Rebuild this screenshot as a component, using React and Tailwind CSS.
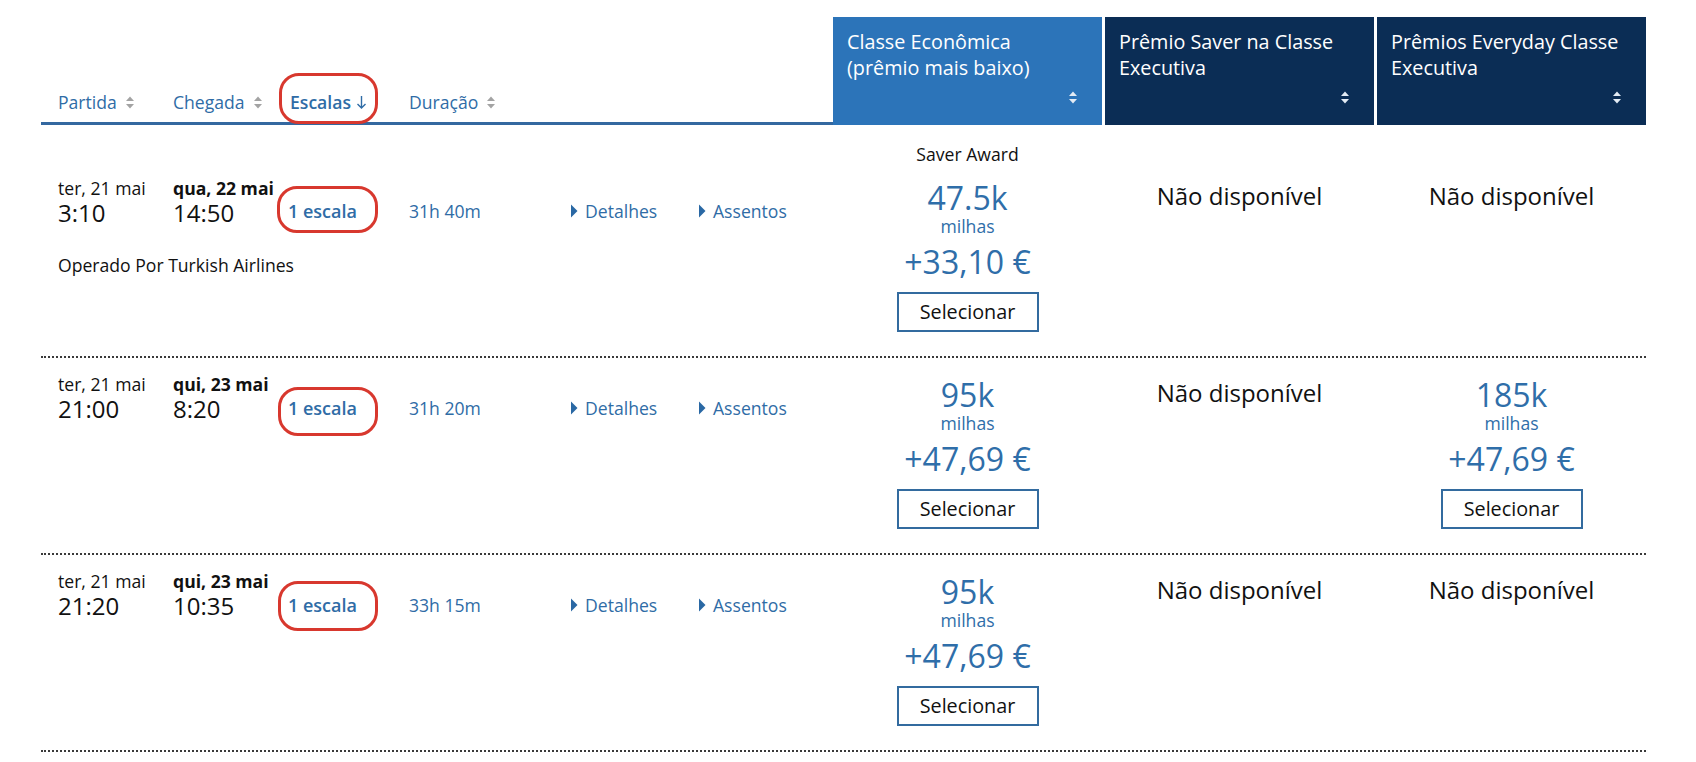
import React from "react";

const BLUE = "text-[#2f6ca6]";

function SortIcon({ light = false }) {
  return (
    <svg width="8" height="13" viewBox="0 0 8 13" className="shrink-0">
      <path d="M0 5 L4 0.5 L8 5 Z" fill={light ? "#e3ebf4" : "#a3a3a3"} />
      <path d="M0 8 L4 12.5 L8 8 Z" fill={light ? "#e3ebf4" : "#a3a3a3"} />
    </svg>
  );
}

function DownArrow() {
  return (
    <svg width="11" height="14" viewBox="0 0 11 14" className="shrink-0">
      <path d="M5.5 1 V13 M1.5 9 L5.5 13 L9.5 9" stroke="#2f6ca6" strokeWidth="1.4" fill="none" />
    </svg>
  );
}

function Caret() {
  return (
    <svg width="7" height="14" viewBox="0 0 7 14" className="shrink-0">
      <path d="M0 0.5 L6.5 7 L0 13.5 Z" fill="#2a68a4" />
    </svg>
  );
}

function Oval({ className }) {
  return (
    <span
      className={
        "pointer-events-none absolute rounded-[20px] border-[3px] border-[#d8382e] " +
        className
      }
    />
  );
}

function FareHeader({ title, active }) {
  return (
    <div
      className={
        "flex h-[108px] flex-col pl-[14px] pt-[12px] text-white " +
        (active ? "bg-[#2c74b9]" : "bg-[#0b2d55]")
      }
    >
      <div className="whitespace-pre-line text-[19.8px] leading-[26px]">{title}</div>
      <div className="mt-auto flex justify-end pb-[21px] pr-[25px]">
        <SortIcon light />
      </div>
    </div>
  );
}

function Price({ miles, fee }) {
  return (
    <div className="flex flex-col items-center">
      <div className="text-[32px] leading-[32px] text-[#2f6ea9]">{miles}</div>
      <div className="mt-[2px] text-[17.6px] leading-[20px] text-[#2f6ea9]">milhas</div>
      <div className="mt-[7px] text-[32px] leading-[38px] text-[#2f6ea9]">{fee}</div>
      <button className="mt-[11px] flex h-[40px] w-[142px] items-center justify-center border-2 border-[#336b9f] bg-white text-[19.8px] text-[#111]">
        Selecionar
      </button>
    </div>
  );
}

function Unavailable() {
  return <div className="text-center text-[24px] leading-[32px] text-[#111]">Não disponível</div>;
}

const flights = [
  {
    depDate: "ter, 21 mai",
    depTime: "3:10",
    arrDate: "qua, 22 mai",
    arrTime: "14:50",
    duration: "31h 40m",
    operator: "Operado Por Turkish Airlines",
    label: "Saver Award",
    econ: { miles: "47.5k", fee: "+33,10 €" },
    saver: null,
    everyday: null,
    oval: "left-[-11px] top-[-13px] h-[47px] w-[101px]",
  },
  {
    depDate: "ter, 21 mai",
    depTime: "21:00",
    arrDate: "qui, 23 mai",
    arrTime: "8:20",
    duration: "31h 20m",
    operator: null,
    label: null,
    econ: { miles: "95k", fee: "+47,69 €" },
    saver: null,
    everyday: { miles: "185k", fee: "+47,69 €" },
    oval: "left-[-10px] top-[-9px] h-[49px] w-[100px]",
  },
  {
    depDate: "ter, 21 mai",
    depTime: "21:20",
    arrDate: "qui, 23 mai",
    arrTime: "10:35",
    duration: "33h 15m",
    operator: null,
    label: null,
    econ: { miles: "95k", fee: "+47,69 €" },
    saver: null,
    everyday: null,
    oval: "left-[-10px] top-[-12px] h-[50px] w-[100px]",
  },
];

function FlightRow({ f }) {
  const hasLabel = !!f.label;
  return (
    <div className="grid grid-cols-[789px_269px_269px_269px] gap-x-[3px] border-b-2 border-dotted border-[#3a3a3a]">
      {/* flight info */}
      <div className={"flex flex-col " + (hasLabel ? "pt-[53px]" : "pt-[16px]")}>
        <div className="flex items-start">
          <div className="w-[132px] pl-[17px] text-[#111]">
            <div className="text-[17.6px] leading-[20px]">{f.depDate}</div>
            <div className="text-[24px] leading-[30px]">{f.depTime}</div>
          </div>
          <div className="w-[115px] text-[#111]">
            <div className="text-[17.6px] font-bold leading-[20px]">{f.arrDate}</div>
            <div className="text-[24px] leading-[30px]">{f.arrTime}</div>
          </div>
          <div className={hasLabel ? "w-[121px] pt-[21px]" : "w-[121px] pt-[22px]"}>
            <span className={"relative inline-block text-[18px] font-semibold leading-[24px] " + BLUE}>
              1 escala
              <Oval className={f.oval} />
            </span>
          </div>
          <div
            className={
              "w-[162px] text-[17.6px] leading-[24px] " + BLUE + (hasLabel ? " pt-[21px]" : " pt-[22px]")
            }
          >
            {f.duration}
          </div>
          <div
            className={
              "flex w-[128px] items-center gap-[7px] text-[17.6px] leading-[24px] " +
              BLUE +
              (hasLabel ? " pt-[21px]" : " pt-[22px]")
            }
          >
            <Caret />
            <span>Detalhes</span>
          </div>
          <div
            className={
              "flex items-center gap-[7px] text-[17.6px] leading-[24px] " +
              BLUE +
              (hasLabel ? " pt-[21px]" : " pt-[22px]")
            }
          >
            <Caret />
            <span>Assentos</span>
          </div>
        </div>
        {f.operator && (
          <div className="mt-[25px] pl-[17px] text-[17.6px] leading-[24px] text-[#111]">{f.operator}</div>
        )}
      </div>

      {/* economy */}
      <div className="flex flex-col items-center pb-[24px] pt-[19px]">
        {hasLabel && (
          <div className="mb-[18px] text-[17.6px] leading-[20px] text-[#111]">{f.label}</div>
        )}
        <div className={hasLabel ? "" : "pt-[2px]"}>
          <Price {...f.econ} />
        </div>
      </div>

      {/* saver business */}
      <div className={"flex flex-col items-center " + (hasLabel ? "pt-[55px]" : "pt-[19px]")}>
        {f.saver ? <Price {...f.saver} /> : <Unavailable />}
      </div>

      {/* everyday business */}
      <div
        className={
          "flex flex-col items-center " +
          (f.everyday ? "pt-[21px]" : hasLabel ? "pt-[55px]" : "pt-[19px]")
        }
      >
        {f.everyday ? <Price {...f.everyday} /> : <Unavailable />}
      </div>
    </div>
  );
}

export default function App() {
  return (
    <div className="h-[762px] w-[1696px] bg-white pl-[41px] pt-[17px] font-['Open_Sans',_'Noto_Sans',_sans-serif]">
      <div className="w-[1605px]">
        {/* column headers */}
        <div className="grid grid-cols-[789px_269px_269px_269px] gap-x-[3px]">
          <div className="-mr-[3px] flex h-[108px] items-end border-b-[3px] border-[#3468a0] pb-[8px] text-[17.6px] leading-[24px]">
            <div className={"flex w-[132px] items-center gap-[9px] pl-[17px] " + BLUE}>
              <span>Partida</span>
              <SortIcon />
            </div>
            <div className={"flex w-[115px] items-center gap-[9px] " + BLUE}>
              <span>Chegada</span>
              <SortIcon />
            </div>
            <div className="w-[121px] pl-[2px]">
              <span className={"relative inline-flex items-center gap-[5px] font-semibold " + BLUE}>
                <span>Escalas</span>
                <DownArrow />
                <Oval className="left-[-11px] top-[-17px] h-[51px] w-[99px]" />
              </span>
            </div>
            <div className={"flex items-center gap-[9px] " + BLUE}>
              <span>Duração</span>
              <SortIcon />
            </div>
          </div>
          <FareHeader title={"Classe Econômica\n(prêmio mais baixo)"} active />
          <FareHeader title={"Prêmio Saver na Classe\nExecutiva"} />
          <FareHeader title={"Prêmios Everyday Classe\nExecutiva"} />
        </div>

        {flights.map((f, i) => (
          <FlightRow key={i} f={f} />
        ))}
      </div>
    </div>
  );
}
